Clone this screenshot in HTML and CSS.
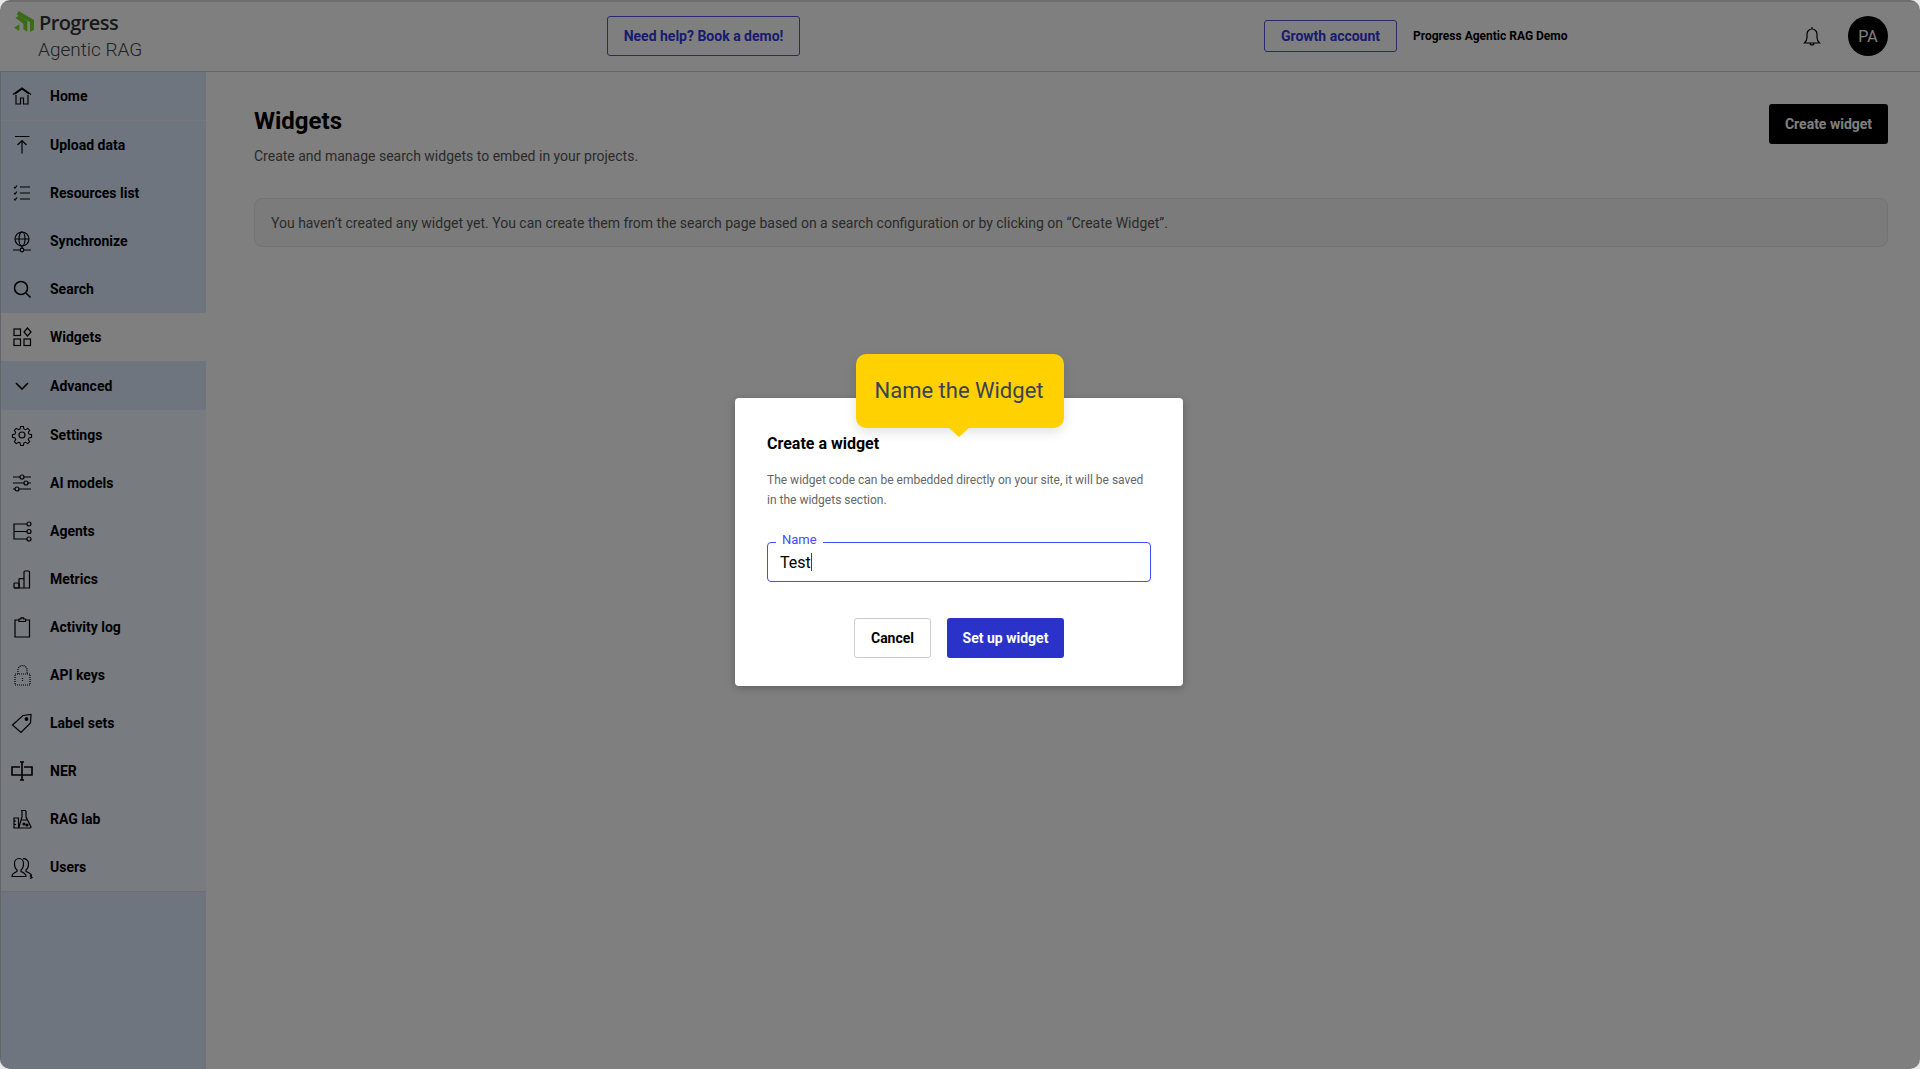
FILE: index.html
```html
<!DOCTYPE html>
<html lang="en">

<head>
    <meta charset="UTF-8">
    <title>Widgets - Progress Agentic RAG</title>
    <link rel="stylesheet" href="styles.css">
</head>

<body>
    <div class="app">
        <header class="topbar">
            <div class="logo">
                <div class="logo-top">
                    <svg class="logo-mark" viewBox="0 0 60 66"><path d="M14 0 60 27V56L48 63V34L8 11z" fill="#74d930"/><path d="M4 20 14 14 40 30V62L28 55V38z" fill="#74d930"/><path d="M0 50 16 40V60z" fill="#74d930"/></svg>
                    <span class="logo-name">Progress</span>
                </div>
                <div class="logo-sub">Agentic RAG</div>
            </div>
            <button class="btn-outline btn-demo">Need help? Book a demo!</button>
            <div class="topbar-right">
                <button class="btn-outline btn-account">Growth account</button>
                <span class="account-name">Progress Agentic RAG Demo</span>
                <svg class="bell" viewBox="0 0 24 24"><path d="M4.500 19c1.500-1.500 2.500-3 2.500-5.500V10a5 5 0 0 1 10 0v3.500c0 2.500 1 4 2.500 5.500zM12 3V5M10 19a2 2 0 0 0 4 0"/></svg>
                <div class="avatar">PA</div>
            </div>
        </header>

        <div class="body">
            <nav class="sidebar">
                <a class="nav-item nav-first"><svg viewBox="0 0 24 24"><path d="M3 10.500 12 4l9 6.500M5 10 12 5l7 5M6 11v9h4.500v-6h3v6H18v-9"/></svg>Home</a>
                <a class="nav-item"><svg viewBox="0 0 24 24"><path d="M5 3.500H19.500M12 7.500V20.500M7.500 12 12 7.500 16.500 12"/></svg>Upload data</a>
                <a class="nav-item"><svg viewBox="0 0 24 24"><path d="M10 6H20M10 12H20M10 18H20M4 6l1 1 2-2.500M4 12l1 1 2-2.500M4 18l1 1 2-2.500"/></svg>Resources list</a>
                <a class="nav-item"><svg viewBox="0 0 24 24"><circle cx="12" cy="10" r="7"/><ellipse cx="12" cy="10" rx="3" ry="7"/><path d="M5 10H19M12 17v2M3 21H10M14 21H21"/><circle cx="12" cy="21" r="1.800"/></svg>Synchronize</a>
                <a class="nav-item"><svg class="thick" viewBox="0 0 24 24"><circle cx="11" cy="11" r="6.500"/><path d="M16 16l4.500 4.500"/></svg>Search</a>
                <a class="nav-item nav-selected"><svg viewBox="0 0 24 24"><rect x="4" y="4" width="6.500" height="6.500"/><rect x="4" y="14" width="6.500" height="6.500"/><rect x="14" y="14" width="6.500" height="6.500"/><path d="M17.500 3 21 7l-3.500 4L14 7z"/></svg>Widgets</a>
                <a class="nav-item nav-advanced"><svg class="thick" viewBox="0 0 24 24"><path d="M6 9l6 6 6-6"/></svg>Advanced</a>
                <div class="submenu">
                    <a class="nav-item"><svg viewBox="0 0 24 24"><circle cx="12" cy="12" r="3"/><path transform="translate(1.200 1.200) scale(.9)" d="M10.500 2.500h3l.6 2.800 1.900.8 2.400-1.500 2.100 2.100-1.500 2.400.8 1.900 2.800.6v3l-2.800.6-.8 1.900 1.500 2.400-2.100 2.100-2.400-1.500-1.900.8-.6 2.800h-3l-.6-2.800-1.900-.8-2.400 1.500-2.100-2.100 1.500-2.400-.8-1.900-2.800-.6v-3l2.800-.6.8-1.900-1.500-2.400 2.100-2.100 2.400 1.500 1.900-.8z"/></svg>Settings</a>
                    <a class="nav-item"><svg viewBox="0 0 24 24"><path d="M3 6H10M14 6H21M3 12H14M18 12H21M3 18H5M9 18H21"/><circle cx="12" cy="6" r="2"/><circle cx="16" cy="12" r="2"/><circle cx="7" cy="18" r="2"/></svg>AI models</a>
                    <a class="nav-item"><svg viewBox="0 0 24 24"><path d="M17 5H4V20H17M4 12.500H17"/><circle cx="19" cy="5" r="2"/><circle cx="19" cy="12.500" r="2"/><circle cx="19" cy="20" r="2"/></svg>Agents</a>
                    <a class="nav-item"><svg viewBox="0 0 24 24"><rect x="4" y="16" width="5" height="5" rx=".8"/><path d="M9 21V12.500a.8.8 0 0 1 .8-.8H14V21M14 21V5a1 1 0 0 1 1-1h3.500a1 1 0 0 1 1 1V21H4"/></svg>Metrics</a>
                    <a class="nav-item"><svg viewBox="0 0 24 24"><path d="M9 5H5V22H19.500V5H15.500M9 6.500V4h2V2.800h2.500V4h2V6.500z"/></svg>Activity log</a>
                    <a class="nav-item"><svg class="dotted" viewBox="0 0 24 24"><path d="M8 11V7a4.500 4.500 0 0 1 9 0v4M5 11H20V22H5z"/><path d="M12.500 15v3"/></svg>API keys</a>
                    <a class="nav-item"><svg viewBox="0 0 24 24"><path d="M2.500 14 13 4.500 21 3.500 20.500 12 11 21.500z"/><circle cx="16.500" cy="8" r="1.300" fill="#000"/></svg>Label sets</a>
                    <a class="nav-item"><svg class="thick" viewBox="0 0 24 24"><path d="M10 8H2V16H10M14 8H22V16H14M12 3V21M10 3H14M10 21H14M10 16H14"/></svg>NER</a>
                    <a class="nav-item"><svg viewBox="0 0 24 24"><path d="M4 11H8.500V21H4zM4 14H6M4 17.500H6M11 3.500H16M12 4V10L9 20a1 1 0 0 0 1 1H20a1 1 0 0 0 1-1L16 10V4M11 13H17"/><circle cx="14" cy="17" r="1" fill="#000"/><circle cx="17" cy="18" r="1" fill="#000"/></svg>RAG lab</a>
                    <a class="nav-item"><svg viewBox="0 0 24 24"><path d="M2 21.500c0-3 2-3.500 5-5V15c-2-1.500-2.500-3-2.500-6.500C4.500 5.500 6.500 3.500 9 3.500c2.500 0 4.500 2 4.500 5 0 3.500-.5 5-2.500 6.500v1.500c3 1.500 5 2 5 5zM13 3.800c2.500-.5 5.500 1.500 5.500 4.700 0 3.500-.5 5-2.500 6.500v1.500c3 1.500 5.500 2 5.500 4.500M20 20.500l2 2-2 1"/></svg>Users</a>
                </div>
            </nav>

            <main class="content">
                <div class="page-head">
                    <div>
                        <h1>Widgets</h1>
                        <p class="page-desc">Create and manage search widgets to embed in your projects.</p>
                    </div>
                    <button class="btn-dark">Create widget</button>
                </div>
                <div class="notice">You haven’t created any widget yet. You can create them from the search page based on a search configuration or by clicking on “Create Widget”.</div>
            </main>
        </div>

        <div class="overlay">
            <div class="modal">
                <div class="tip">Name the Widget</div>
                <h2>Create a widget</h2>
                <p class="modal-desc">The widget code can be embedded directly on your site, it will be saved in the widgets section.</p>
                <div class="field">
                    <span class="field-label">Name</span>
                    <span class="field-value">Test</span><span class="caret"></span>
                </div>
                <div class="modal-actions">
                    <button class="btn-cancel">Cancel</button>
                    <button class="btn-primary">Set up widget</button>
                </div>
            </div>
        </div>
    </div>
</body>

</html>
```

FILE: styles.css
```css
* {
    box-sizing: border-box;
}

html,
body {
    height: 100%;
    margin: 0;
    background: #e8e8e8;
}

body {
    font-family: Roboto, "Liberation Sans", sans-serif;
    color: #000;
}

button {
    font-family: inherit;
    cursor: pointer;
}

.app {
    position: relative;
    height: 1069px;
    display: flex;
    flex-direction: column;
    background: #fff;
    border-radius: 10px;
    overflow: hidden;
}

.topbar {
    height: 72px;
    flex-shrink: 0;
    display: flex;
    align-items: center;
    border-bottom: 1px solid #ccc;
    border-top: 2px solid #ddd;
    padding: 0 32px 1px 0;
}

.logo {
    width: 607px;
    padding-left: 14px;
}

.logo-top {
    display: flex;
    align-items: center;
    gap: 5px;
    height: 22px;
}

.logo-mark {
    width: 20px;
    height: 22px;
}

.logo-name {
    font-family: "Open Sans", sans-serif;
    font-size: 20px;
    font-weight: 600;
    letter-spacing: -.6px;
    color: #333;
}

.logo-sub {
    font-weight: 300;
    font-size: 19px;
    color: #444;
    margin-top: 5px;
    padding-left: 24px;
}

.btn-outline {
    background: #fff;
    border: 1px solid #5a50d8;
    border-radius: 3px;
    color: #3038e0;
    font-size: 14px;
    font-weight: 700;
}

.btn-demo {
    width: 193px;
    height: 40px;
}

.topbar-right {
    margin-left: auto;
    display: flex;
    align-items: center;
}

.btn-account {
    width: 133px;
    height: 32px;
}

.account-name {
    font-size: 12px;
    font-weight: 700;
    margin-left: 16px;
    width: 387px;
}

.bell {
    width: 24px;
    height: 24px;
    fill: none;
    stroke: #000;
    stroke-width: 1.2;
}

.avatar {
    width: 40px;
    height: 40px;
    margin-left: 24px;
    border-radius: 50%;
    background: #000;
    color: #fff;
    font-size: 16px;
    display: flex;
    align-items: center;
    justify-content: center;
}

.body {
    flex: 1;
    display: flex;
}

.sidebar {
    width: 206px;
    flex-shrink: 0;
    background: #dceaff;
    border-left: 1px solid #c4cad4;
}

.nav-item {
    height: 48px;
    display: flex;
    align-items: center;
    gap: 16px;
    padding-left: 9px;
    font-size: 14px;
    font-weight: 700;
    color: #000;
}

.nav-item svg {
    width: 24px;
    height: 24px;
    fill: none;
    stroke: #000;
    stroke-width: 1.2;
    flex-shrink: 0;
}

.nav-item svg.thick {
    stroke-width: 1.6;
}

.nav-item svg.dotted {
    stroke-dasharray: 1 1;
}

.nav-first {
    border-bottom: 1px solid #f0f0f0;
    height: 49px;
}

.nav-selected {
    background: #fff;
}

.nav-advanced {
    margin-top: 1px;
}

.submenu {
    background: #f0f6ff;
    border-bottom: 1px solid #ddd;
    padding-top: 1px;
}

.content {
    flex: 1;
    padding: 32px 32px 0 48px;
}

.page-head {
    display: flex;
    justify-content: space-between;
}

h1 {
    font-size: 24px;
    font-weight: 700;
    line-height: 34px;
    margin: 0;
}

.page-desc {
    font-size: 14px;
    line-height: 20px;
    color: #555;
    margin: 8px 0 0;
}

.btn-dark {
    width: 119px;
    height: 40px;
    border: none;
    border-radius: 3px;
    background: #000;
    color: #fff;
    font-size: 14px;
    font-weight: 700;
}

.notice {
    height: 49px;
    margin-top: 32px;
    padding: 0 16px;
    line-height: 49px;
    font-size: 14px;
    color: #555;
    background: #f7f7f7;
    border: 1px solid #e6e6e6;
    border-radius: 8px;
}

.overlay {
    position: absolute;
    inset: 0;
    display: flex;
    align-items: center;
    justify-content: center;
    padding: 15px 2px 0 0;
    background: rgba(0, 0, 0, .5);
}

.modal {
    position: relative;
    width: 448px;
    height: 288px;
    padding: 32px;
    background: #fff;
    border-radius: 4px;
    box-shadow: 0 2px 8px rgba(0, 0, 0, .25);
}

.tip {
    position: absolute;
    top: -44px;
    left: 121px;
    width: 208px;
    height: 74px;
    padding: 0 2px 2px 0;
    display: flex;
    align-items: center;
    justify-content: center;
    background: #ffd100;
    border-radius: 10px;
    color: #3a4258;
    font-size: 22px;
    box-shadow: 0 4px 12px rgba(0, 0, 0, .12);
}

.tip::after {
    content: "";
    position: absolute;
    bottom: -9px;
    left: 93px;
    border-left: 10px solid transparent;
    border-right: 10px solid transparent;
    border-top: 9px solid #ffd100;
}

h2 {
    font-size: 16px;
    font-weight: 700;
    line-height: 24px;
    margin: 2px 0 0;
}

.modal-desc {
    font-size: 12px;
    line-height: 20px;
    color: #666;
    margin: 14px 0 0;
}

.field {
    position: relative;
    height: 40px;
    margin-top: 32px;
    padding: 0 12px;
    display: flex;
    align-items: center;
    border: 1px solid #3f4dff;
    border-radius: 4px;
    font-size: 16px;
}

.field-label {
    position: absolute;
    top: -11px;
    left: 8px;
    padding: 0 6px;
    background: #fff;
    font-size: 13px;
    line-height: 16px;
    color: #3f4dff;
}

.caret {
    width: 1px;
    height: 18px;
    background: #2a32c9;
}

.modal-actions {
    display: flex;
    justify-content: center;
    gap: 16px;
    margin-top: 36px;
}

.btn-cancel {
    width: 77px;
    height: 40px;
    background: #fff;
    border: 1px solid #ccc;
    border-radius: 3px;
    font-size: 14px;
    font-weight: 700;
}

.btn-primary {
    width: 117px;
    height: 40px;
    background: #2a32c9;
    border: none;
    border-radius: 3px;
    color: #fff;
    font-size: 14px;
    font-weight: 700;
}
```
